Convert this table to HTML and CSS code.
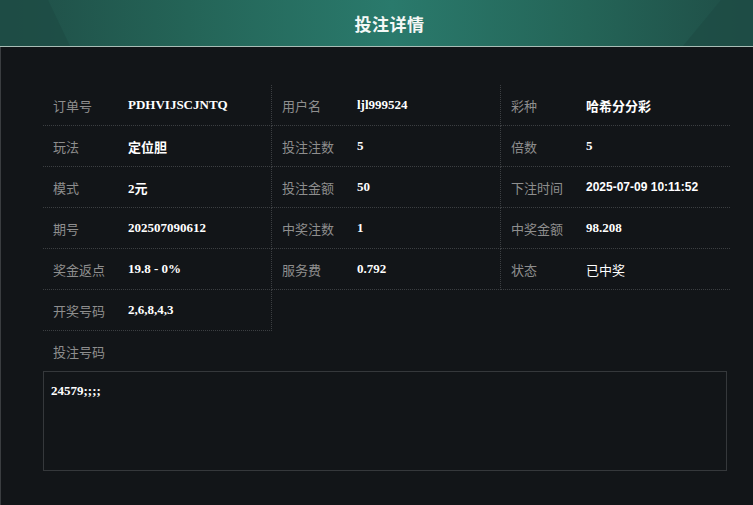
FILE: index.html
```html
<!DOCTYPE html>
<html lang="zh">
<head>
<meta charset="utf-8">
<link rel="stylesheet" href="styles.css">
</head>
<body>
<div class="header">
  <div class="corner corner-left"></div>
  <div class="corner corner-right"></div>
  <h1 class="title">投注详情</h1>
</div>
<div class="content">
  <div class="grid">
    <div class="cell"><span class="label">订单号</span><span class="value serif">PDHVIJSCJNTQ</span></div>
    <div class="cell"><span class="label">用户名</span><span class="value serif">ljl999524</span></div>
    <div class="cell last"><span class="label">彩种</span><span class="value sans">哈希分分彩</span></div>

    <div class="cell"><span class="label">玩法</span><span class="value sans">定位胆</span></div>
    <div class="cell"><span class="label">投注注数</span><span class="value serif">5</span></div>
    <div class="cell last"><span class="label">倍数</span><span class="value serif">5</span></div>

    <div class="cell"><span class="label">模式</span><span class="value serif">2元</span></div>
    <div class="cell"><span class="label">投注金额</span><span class="value serif">50</span></div>
    <div class="cell last"><span class="label">下注时间</span><span class="value sans date">2025-07-09 10:11:52</span></div>

    <div class="cell"><span class="label">期号</span><span class="value serif">202507090612</span></div>
    <div class="cell"><span class="label">中奖注数</span><span class="value serif">1</span></div>
    <div class="cell last"><span class="label">中奖金额</span><span class="value serif">98.208</span></div>

    <div class="cell"><span class="label">奖金返点</span><span class="value serif">19.8 - 0%</span></div>
    <div class="cell"><span class="label">服务费</span><span class="value serif">0.792</span></div>
    <div class="cell last"><span class="label">状态</span><span class="value plain">已中奖</span></div>

    <div class="cell"><span class="label">开奖号码</span><span class="value serif">2,6,8,4,3</span></div>
  </div>
  <div class="bet-label">投注号码</div>
  <div class="bet-box">24579;;;;</div>
</div>
</body>
</html>
```
FILE: styles.css
```css
* { box-sizing: border-box; }
html, body { margin: 0; padding: 0; }
body {
  width: 753px;
  height: 505px;
  background: #121518;
  font-family: "Noto Sans CJK SC", "Noto Sans", sans-serif;
  overflow: hidden;
}
.header {
  position: relative;
  height: 47px;
  background: linear-gradient(90deg, #1f4d46 0%, #246457 25%, #2a7a6c 52%, #246457 78%, #1f4d46 100%);
  border-bottom: 1px solid #a9bdb6;
  display: flex;
  align-items: center;
  justify-content: center;
  padding-left: 26px;
  overflow: hidden;
}
.corner {
  position: absolute;
  top: 0;
  width: 70px;
  height: 46px;
  background: #1e4c45;
  opacity: 0.7;
}
.corner-left {
  left: 0;
  clip-path: polygon(0 0, 48px 0, 70px 46px, 0 46px);
}
.corner-right {
  right: 0;
  clip-path: polygon(38px 0, 70px 0, 70px 46px, 0 46px);
}
.title {
  position: relative;
  margin: 0;
  color: #f4f8f6;
  font-size: 17px;
  font-weight: bold;
  letter-spacing: 0.5px;
}
.content {
  padding: 38px 23px 0 43px;
  border-left: 1px solid #3a3d40;
  height: 458px;
}
.grid {
  display: grid;
  grid-template-columns: 229px 229px 229px;
  width: 687px;
  margin-left: -1px;
}
.cell {
  height: 41px;
  display: flex;
  align-items: center;
  padding-left: 10px;
  border-bottom: 1px dotted #3c3f42;
  border-right: 1px dotted #3c3f42;
}
.cell.last { border-right: none; }
.label {
  width: 75px;
  flex: none;
  color: #8e8e8e;
  font-size: 13px;
}
.value {
  color: #ffffff;
  font-size: 13px;
  white-space: nowrap;
}
.serif {
  font-family: "Liberation Serif", "Noto Sans CJK SC", serif;
  font-weight: bold;
}
.sans {
  font-family: "Liberation Sans", "Noto Sans CJK SC", sans-serif;
  font-weight: bold;
}
.date { font-size: 12px; }
.plain {
  font-family: "Noto Sans CJK SC", sans-serif;
  font-weight: normal;
}
.bet-label {
  height: 40px;
  display: flex;
  align-items: center;
  padding-left: 9px;
  color: #8e8e8e;
  font-size: 13px;
}
.bet-box {
  width: 684px;
  height: 100px;
  margin-left: -1px;
  border: 1px solid #35383b;
  padding: 11px 7px;
  color: #ffffff;
  font-family: "Liberation Serif", serif;
  font-weight: bold;
  font-size: 13px;
}
```
